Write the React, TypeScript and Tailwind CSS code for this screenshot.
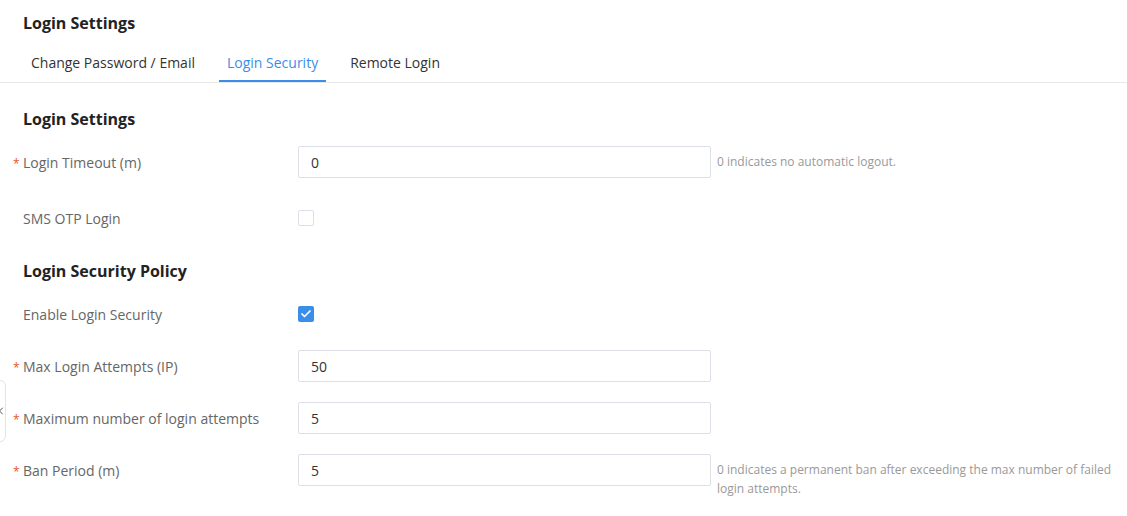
import { Check, ChevronLeft } from 'lucide-react';

type RowProps = {
    label: string;
    required?: boolean;
    children: React.ReactNode;
    help?: string;
    className?: string;
};

function FormRow({ label, required, children, help, className = '' }: RowProps) {
    return (
        <div className={`flex items-start ${className}`}>
            <div className="relative shrink-0 w-[275px] h-8 flex items-center pt-[2px] text-sm text-[#666]">
                {required && <span className="absolute -left-[10px] top-[10px] text-[#e4572e] text-xs">*</span>}
                {label}
            </div>
            {children}
            {help && (
                <p className="shrink-0 ml-[6px] mt-[6px] w-[400px] text-xs leading-[19px] text-[#999]">{help}</p>
            )}
        </div>
    );
}

function TextInput({ value }: { value: string }) {
    return (
        <div className="shrink-0 w-[413px] h-8 border border-[#dcdfe6] rounded-[2px] px-3 pt-[2px] flex items-center text-sm text-[#333] bg-white">
            {value}
        </div>
    );
}

function Checkbox({ checked }: { checked?: boolean }) {
    if (checked) {
        return (
            <div className="shrink-0 mt-2 w-4 h-4 rounded-[2px] bg-[#3b8ee8] flex items-center justify-center">
                <Check className="w-3 h-3 text-white" strokeWidth={3.5} />
            </div>
        );
    }
    return <div className="shrink-0 mt-2 w-4 h-4 rounded-[2px] border border-[#dcdfe6] bg-white" />;
}

export default function App() {
    const tabs = ['Change Password / Email', 'Login Security', 'Remote Login'];

    return (
        <div className="relative w-[1127px] h-[516px] bg-white overflow-hidden" style={{ fontFamily: '"Open Sans", "Noto Sans", sans-serif' }}>
            {/* collapse handle */}
            <div className="absolute -left-[14px] top-[380px] w-5 h-[62px] border border-[#e4e4e4] rounded-md bg-white flex items-center justify-end pr-0">
                <ChevronLeft className="w-3 h-3 -mr-[2px] text-[#555]" strokeWidth={2} />
            </div>

            <div className="px-[23px] pt-[11px]">
                <h1 className="text-base leading-6 font-bold text-[#222]">Login Settings</h1>
            </div>

            <div className="mt-[7px] px-[23px] border-b border-[#e8e8e8] flex gap-4">
                {tabs.map((t) => (
                    <div
                        key={t}
                        className={`px-2 h-10 pt-[3px] flex items-center text-sm border-b-2 ${
                            t === 'Login Security' ? 'text-[#3b8ee8] border-[#3b8ee8]' : 'text-[#333] border-transparent'
                        }`}
                    >
                        {t}
                    </div>
                ))}
            </div>

            <div className="px-[23px]">
                <h2 className="mt-[24px] text-base leading-6 font-bold text-[#222]">Login Settings</h2>

                <FormRow label="Login Timeout (m)" required help="0 indicates no automatic logout." className="mt-[15px]">
                    <TextInput value="0" />
                </FormRow>

                <FormRow label="SMS OTP Login" className="mt-6">
                    <Checkbox />
                </FormRow>

                <h2 className="mt-[25px] text-base leading-6 font-bold text-[#222]">Login Security Policy</h2>

                <FormRow label="Enable Login Security" className="mt-[15px]">
                    <Checkbox checked />
                </FormRow>

                <FormRow label="Max Login Attempts (IP)" required className="mt-5">
                    <TextInput value="50" />
                </FormRow>

                <FormRow label="Maximum number of login attempts" required className="mt-5">
                    <TextInput value="5" />
                </FormRow>

                <FormRow
                    label="Ban Period (m)"
                    required
                    help="0 indicates a permanent ban after exceeding the max number of failed login attempts."
                    className="mt-5"
                >
                    <TextInput value="5" />
                </FormRow>
            </div>
        </div>
    );
}
